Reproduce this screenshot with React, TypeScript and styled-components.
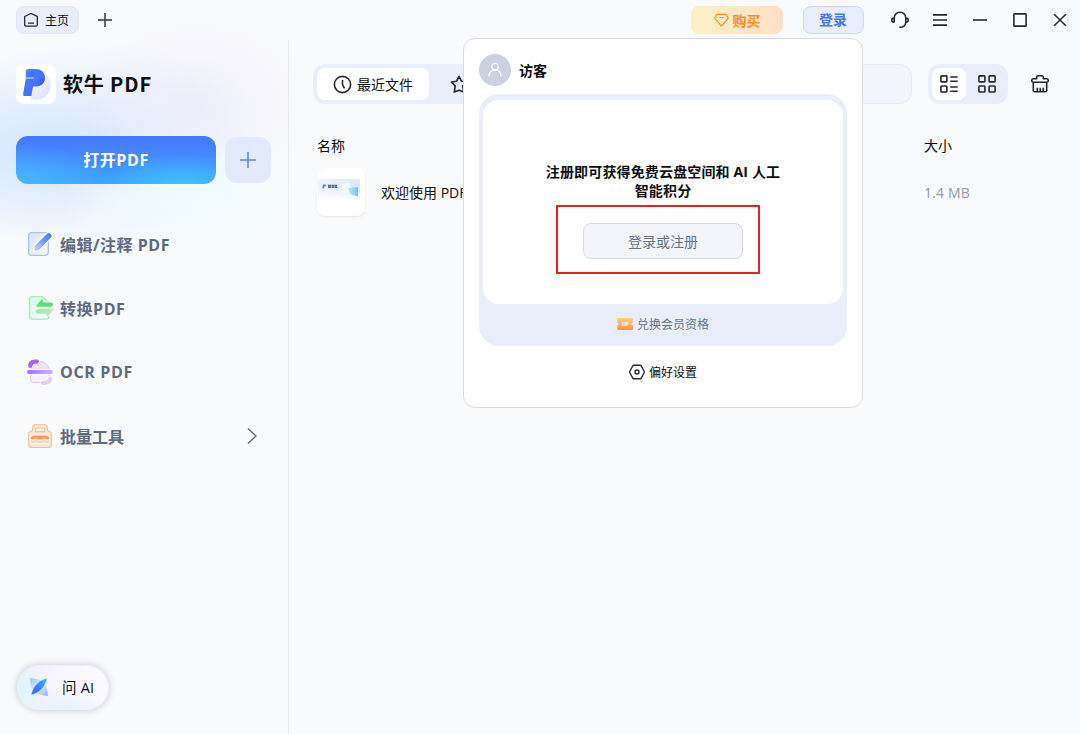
import React from "react";
import styled, { createGlobalStyle } from "styled-components";

const GlobalStyle = createGlobalStyle`
  * { box-sizing: border-box; }
  html, body { margin: 0; padding: 0; }
  body {
    font-family: "Open Sans", "Noto Sans CJK SC", sans-serif;
    color: #0d0f12;
    overflow: hidden;
  }
  button { font: inherit; color: inherit; margin: 0; padding: 0; border: 0; background: none; }
  svg { display: block; flex: none; }
`;

const Window = styled.div`
  position: relative;
  display: flex;
  flex-direction: column;
  width: 1080px;
  height: 734px;
  overflow: hidden;
  background:
    radial-gradient(ellipse 120px 85px at 10px 155px, rgba(200, 227, 252, 0.5), rgba(200, 227, 252, 0.22) 50%, rgba(200, 227, 252, 0)),
    radial-gradient(ellipse 130px 60px at 185px 195px, rgba(238, 253, 255, 0.9), rgba(238, 253, 255, 0.45) 50%, rgba(238, 253, 255, 0)),
    radial-gradient(ellipse 120px 95px at 195px 105px, rgba(235, 232, 250, 0.65), rgba(235, 232, 250, 0.28) 50%, rgba(235, 232, 250, 0)),
    radial-gradient(ellipse 180px 105px at 80px 145px, rgba(208, 226, 253, 0.8), rgba(208, 226, 253, 0.32) 55%, rgba(208, 226, 253, 0)),
    #f9fafc;
`;

const TitleBar = styled.header`
  display: flex;
  align-items: center;
  height: 40px;
  flex: none;
`;

const HomeTab = styled.button`
  display: flex;
  align-items: center;
  gap: 6px;
  width: 63px;
  height: 28px;
  margin-left: 16px;
  padding-left: 6px;
  border: 1px solid #dfe6fb;
  border-radius: 8px;
  background: #e9edfc;
  font-size: 12px;
  white-space: nowrap;
`;

const IconButton = styled.button<{ $size?: number }>`
  display: flex;
  align-items: center;
  justify-content: center;
  width: ${(p) => p.$size ?? 40}px;
  height: ${(p) => p.$size ?? 40}px;
`;

const NewTab = styled(IconButton)`
  margin-left: 6px;
`;

const Spacer = styled.div`
  flex: 1;
`;

const BuyButton = styled.button`
  display: flex;
  align-items: center;
  justify-content: center;
  gap: 4px;
  width: 92px;
  height: 28px;
  border-radius: 8px;
  background: linear-gradient(90deg, #fbf1c5, #ffdfc6);
  color: #fb8c1e;
  font-size: 14px;
  font-weight: 600;
`;

const LoginButton = styled.button`
  width: 61px;
  height: 28px;
  margin: 0 16px 0 20px;
  padding-right: 1px;
  border: 1px solid #cbdafc;
  border-radius: 8px;
  background: #e9eefd;
  color: #4276fb;
  font-size: 14px;
  font-weight: 600;
  line-height: 26px;
`;

const Body = styled.div`
  display: flex;
  flex: 1;
`;

const Sidebar = styled.aside`
  display: flex;
  flex-direction: column;
  width: 289px;
  padding: 24px 16px;
  border-right: 1px solid #e7e9f3;
`;

const Brand = styled.div`
  display: flex;
  align-items: center;
  gap: 8px;
  height: 40px;
`;

const BrandLogo = styled.div`
  width: 40px;
  height: 40px;
  border-radius: 8px;
  background: #fff;
`;

const BrandName = styled.h1`
  margin: 0 0 1px -1px;
  font-family: "Noto Sans CJK SC", sans-serif;
  font-size: 20px;
  font-weight: 700;
  line-height: 39px;
  letter-spacing: 0.85px;
`;

const OpenRow = styled.div`
  display: flex;
  align-items: center;
  gap: 9px;
  margin-top: 32px;
`;

const OpenButton = styled.button`
  width: 200px;
  height: 48px;
  border-radius: 12px;
  background:
    radial-gradient(ellipse 100px 42px at 0 50px, rgba(77, 190, 255, 0.85), rgba(77, 190, 255, 0)),
    radial-gradient(ellipse 85px 34px at 165px 52px, rgba(70, 198, 255, 0.9), rgba(70, 198, 255, 0)),
    linear-gradient(180deg, #4678ff 0%, #448bff 50%, #38a4ff 100%);
  color: #fff;
  font-size: 16px;
  font-weight: 700;
  line-height: 48px;
  letter-spacing: 0.6px;
`;

const AddButton = styled(IconButton)`
  border-radius: 12px;
  background: #e3eafd;
`;

const Menu = styled.nav`
  display: flex;
  flex-direction: column;
  margin-top: 28px;
`;

const MenuItem = styled.a<{ $tracking: number }>`
  display: flex;
  align-items: center;
  gap: 6px;
  height: 64px;
  padding: 0 14px 0 10px;
  color: #5d6a80;
  font-size: 16px;
  font-weight: 700;
  letter-spacing: ${(p) => p.$tracking}px;
  white-space: nowrap;
`;

const AskButton = styled.button`
  display: flex;
  align-items: center;
  gap: 13px;
  width: 92px;
  height: 45px;
  margin: auto 0 0 1px;
  padding: 0 0 2px 11px;
  border: 1px solid #eef0f6;
  border-radius: 23px;
  background:
    radial-gradient(ellipse 34px 26px at 0 55%, #def5ff, rgba(223, 245, 255, 0)),
    radial-gradient(ellipse 44px 18px at 50% 100%, #e5f1ff, rgba(226, 239, 255, 0)),
    linear-gradient(100deg, #f1effc, #fbf9ff 70%);
  box-shadow: 0 0 6px 1px rgba(70, 75, 90, 0.22);
  font-size: 14.500px;
  letter-spacing: 0.2px;
  white-space: nowrap;
`;

const Main = styled.main`
  display: flex;
  flex-direction: column;
  flex: 1;
  padding: 24px 20px 0 24px;
`;

const Toolbar = styled.div`
  display: flex;
  align-items: center;
  height: 40px;
`;

const Segments = styled.div`
  display: flex;
  align-items: center;
  gap: 4px;
  height: 40px;
  padding: 4px;
  border-radius: 12px;
  background: #eaeefa;
`;

const Segment = styled.button<{ $active?: boolean; $width: number }>`
  display: flex;
  align-items: center;
  justify-content: center;
  gap: 5px;
  width: ${(p) => p.$width}px;
  height: 32px;
  border-radius: 8px;
  background: ${(p) => (p.$active ? "#fff" : "transparent")};
  font-size: 14px;
  white-space: nowrap;
`;

const SearchField = styled.div`
  width: 200px;
  height: 40px;
  margin: 0 16px 0 auto;
  border: 1px solid #e9ebf4;
  border-radius: 12px;
  background: #f4f5fa;
`;

const ClearButton = styled(IconButton)`
  margin-left: 12px;
`;

const FileTable = styled.div`
  display: flex;
  flex-direction: column;
  margin-top: 31px;
  padding-left: 4px;
`;

const FileRow = styled.div<{ $height: number }>`
  display: grid;
  grid-template-columns: 607px 1fr;
  align-items: center;
  height: ${(p) => p.$height}px;
  font-size: 14px;
`;

const FileName = styled.div`
  display: flex;
  align-items: center;
  gap: 16px;
`;

const Thumb = styled.div`
  display: flex;
  align-items: flex-start;
  width: 48px;
  height: 48px;
  padding: 11px 1px;
  border-radius: 8px;
  background: #fff;
  box-shadow: 0 1px 2px rgba(40, 50, 80, 0.1);
`;

const Muted = styled.span`
  color: #9299a8;
  letter-spacing: 0.15px;
`;

const AccountPopup = styled.section`
  position: absolute;
  left: 463px;
  top: 38px;
  display: flex;
  flex-direction: column;
  width: 400px;
  height: 370px;
  padding: 15px;
  border: 1px solid #d8dae5;
  border-radius: 12px;
  background: #fff;
`;

const Account = styled.div`
  display: flex;
  align-items: center;
  gap: 8px;
  height: 32px;
  font-size: 14px;
  font-weight: 700;
`;

const Avatar = styled.div`
  display: flex;
  align-items: center;
  justify-content: center;
  width: 32px;
  height: 32px;
  border-radius: 50%;
  background: #cbd1df;
`;

const OfferCard = styled.div`
  display: flex;
  flex-direction: column;
  height: 252px;
  margin-top: 8px;
  padding: 6px 4px 0;
  border-radius: 20px;
  background: #eaeefa;
`;

const Offer = styled.div`
  display: flex;
  flex-direction: column;
  align-items: center;
  height: 204px;
  padding-top: 62px;
  border-radius: 16px;
  background: #fff;
`;

const OfferText = styled.p`
  width: 240px;
  margin: 0 0 23px;
  font-size: 14px;
  font-weight: 700;
  line-height: 19px;
  letter-spacing: 0.15px;
  text-align: center;
`;

const RegisterButton = styled.button`
  width: 160px;
  height: 36px;
  border: 1px solid #d7d9e6;
  border-radius: 8px;
  background: #f4f5fa;
  color: #647084;
  font-size: 14px;
`;

const LinkRow = styled.div<{ $height: number; $color: string }>`
  display: flex;
  align-items: center;
  justify-content: center;
  gap: 4px;
  height: ${(p) => p.$height}px;
  color: ${(p) => p.$color};
  font-size: 12px;
`;

const Redeem = styled(LinkRow)`
  padding-bottom: 2px;
`;

const Preferences = styled(LinkRow)`
  margin-top: 5px;
`;

const Highlight = styled.div`
  position: absolute;
  left: 556px;
  top: 205px;
  width: 204px;
  height: 69px;
  border: 2px solid #ed1c24;
`;

const ink = { fill: "none", stroke: "#26282c", strokeWidth: 1.6 } as const;

const HomeIcon = () => (
  <svg width="16" height="16" viewBox="0 0 16 16" {...ink} strokeWidth={1.3}>
    <path d="M1.700 4.500 8 1.500l6.300 3v8.300q0 1.300-1.300 1.300H3q-1.300 0-1.300-1.300z M5 11.200h6" />
  </svg>
);
const PlusIcon = ({ size, color }: { size: number; color: string }) => (
  <svg width={size} height={size} viewBox="0 0 16 16" stroke={color} strokeWidth="1.6">
    <path d="M8 0v16M0 8h16" />
  </svg>
);
const DiamondIcon = () => (
  <svg width="15" height="14" viewBox="0 0 15 14" fill="none" stroke="#fb8c1e" strokeWidth="1.2" strokeLinejoin="round">
    <path d="M3.700 1.300h7.600q.6 0 1 .6l1.700 2.600q.4.6-.1 1.100L8.200 12.300q-.7.7-1.400 0L1.100 5.600q-.5-.5-.1-1.100L2.700 1.900q.4-.6 1-.6z M5.200 4.500h4.600" />
  </svg>
);
const HeadsetIcon = () => (
  <svg width="20" height="20" viewBox="0 0 20 20" {...ink}>
    <path d="M4.200 12.500V8a5.800 5.800 0 0 1 11.600 0v3.500c0 3.400-2.100 5.800-5.400 5.800H9.300" />
    <path d="M4.200 8C.9 7.800.9 12.400 4.200 12.200M15.800 8c3.300-.2 3.300 4.400 0 4.200" />
  </svg>
);
const MenuIcon = () => (
  <svg width="14" height="14" viewBox="0 0 14 14" {...ink}><path d="M0 1.900h14M0 7h14M0 12.100h14" /></svg>
);
const MinimizeIcon = () => (
  <svg width="14" height="14" viewBox="0 0 14 14" {...ink}><path d="M0 7h14" /></svg>
);
const MaximizeIcon = () => (
  <svg width="14" height="14" viewBox="0 0 14 14" {...ink}><rect x=".9" y=".9" width="12.200" height="12.200" rx=".7" /></svg>
);
const CloseIcon = () => (
  <svg width="14" height="14" viewBox="0 0 14 14" {...ink} strokeWidth={1.5}><path d="m1.200 1.200 11.600 11.600M12.800 1.200 1.200 12.800" /></svg>
);
const LogoIcon = () => (
  <svg width="40" height="40" viewBox="0 0 40 40">
    <defs>
      <linearGradient id="logoBlue" x1="0" y1="0" x2="1" y2=".65">
        <stop offset="0" stopColor="#39b5fb" /><stop offset=".3" stopColor="#4376fb" /><stop offset=".7" stopColor="#4772ff" /><stop offset="1" stopColor="#2d4fc8" />
      </linearGradient>
      <linearGradient id="logoShade" x1=".2" y1="0" x2="1" y2="1">
        <stop offset="0" stopColor="#f9faff" /><stop offset="1" stopColor="#d7ddf8" />
      </linearGradient>
    </defs>
    <path d="M29.500 9.500C36 16 36 25 31 31c-5 5.500-12 5.200-16.500 4.500L17 24z" fill="url(#logoShade)" />
    <path d="M12.500 5h7.500c5.500 0 9 3.800 9 8.700 0 5.300-4 8.900-9.500 8.900h-2.500L15.400 32H8.500q-1.700 0-1.400-1.700l2.700-15.700V7.700Q9.800 5 12.500 5z" fill="url(#logoBlue)" />
    <path d="M9.500 14h8.300" stroke="#d8e7ff" strokeWidth="1" />
  </svg>
);
const EditIcon = () => (
  <svg width="28" height="28" viewBox="0 0 28 28" fill="none">
    <defs>
      <linearGradient id="editPage" x1="0" y1="0" x2="1" y2="1"><stop stopColor="#d6e4fc" /><stop offset="1" stopColor="#f9faff" /></linearGradient>
      <linearGradient id="editPen" x1="1" y1="0" x2="0" y2="1"><stop stopColor="#4676fa" /><stop offset=".45" stopColor="#6c93fa" /><stop offset="1" stopColor="#d3defd" /></linearGradient>
    </defs>
    <rect x="2.700" y="2.700" width="19.600" height="22.600" rx="3" fill="url(#editPage)" stroke="#a9c0f3" strokeWidth="1.300" />
    <path d="M9 21.300q-1.500 0-1.300-1.500l.6-4.300L20.700 3.400q2.300-2 4.500.1 2.100 2.200.1 4.500L13.500 20.200q-.6.600-1.400.7z" fill="url(#editPen)" stroke="#fff" strokeWidth="1.100" />
  </svg>
);
const ConvertIcon = () => (
  <svg width="28" height="28" viewBox="0 0 28 28" fill="none">
    <defs>
      <linearGradient id="convPage" x1="0" y1="0" x2="1" y2="1"><stop stopColor="#d2fae5" /><stop offset="1" stopColor="#f4fff8" /></linearGradient>
      <linearGradient id="convArrow" x1="0" y1="0" x2="1" y2="1"><stop stopColor="#98e5a4" /><stop offset="1" stopColor="#c5f2ce" /></linearGradient>
    </defs>
    <path d="M6.500 2.700h9.500l7 5.500v14q0 3-3 3H6.500q-3 0-3-3V5.700q0-3 3-3z" fill="url(#convPage)" stroke="#abe9b8" strokeWidth="1.200" />
    <path d="M11 13.200q-1.900-.3-.6-2.100l4.300-5.300q2.600-2.300 2.600.9V8h7.700q2.400.3 2.400 2.600T25 13.200z" fill="#5edd76" stroke="#f7fffa" strokeWidth=".8" />
    <path d="M12 14.600h14q2.600.3 1.200 2.200l-4.900 5.600q-2.200 1.800-2.200-.8v-1.300h-8.300q-2.600-.3-2.600-2.800t2.800-2.900z" fill="url(#convArrow)" stroke="#fff" strokeWidth=".8" />
  </svg>
);
const OcrIcon = () => (
  <svg width="28" height="28" viewBox="0 0 28 28" fill="none" overflow="visible">
    <defs>
      <linearGradient id="ocrBar"><stop stopColor="#a56cf7" /><stop offset="1" stopColor="#d1b4fa" /></linearGradient>
    </defs>
    <path d="M4.600 13.500C4.600 7 8.500 3.600 14 3.600s9.300 4 9.400 9.900z" fill="#efe3ff" stroke="#dcc7fa" />
    <path d="M4.600 15.500h18.800V21q0 3.500-3.700 3.500H8.300q-3.700 0-3.700-3.500z" fill="#f6efff" stroke="#d7bdfa" />
    <path d="M4.300 7.800q0-4.200 4.700-4.200h1.800" stroke="#fff" strokeWidth="5.800" strokeLinecap="round" />
    <path d="M4.300 7.800q0-4.200 4.700-4.200h1.800" stroke="#a467fa" strokeWidth="4.400" strokeLinecap="round" />
    <path d="M16.500 24.800h1.800q5.700 0 5.700-4.300" stroke="#fff" strokeWidth="5.800" strokeLinecap="round" />
    <path d="M16.500 24.800h1.800q5.700 0 5.700-4.300" stroke="#e0cff9" strokeWidth="4.200" strokeLinecap="round" />
    <rect x="0" y="11" width="28" height="6" rx="3" fill="#fff" />
    <rect x="1" y="12" width="26" height="4" rx="2" fill="url(#ocrBar)" />
  </svg>
);
const ToolsIcon = () => (
  <svg width="28" height="28" viewBox="0 0 28 28" fill="none">
    <path d="M6.600 8.500V6.700q0-4.200 4.200-4.200h6.400q4.200 0 4.200 4.200v1.800q3.900.7 3.900 4.500v9.200q0 3.300-3.300 3.300H6q-3.300 0-3.300-3.300V13q0-3.800 3.900-4.500z" fill="#fde9d6" stroke="#f6bf97" strokeWidth="1.200" />
    <path d="M9.500 9.700V7.200q0-1 1-1h7q1 0 1 1v2.500z" fill="#fff9f3" stroke="#f6bf97" strokeWidth="1.200" />
    <path d="M4.800 17.500q0-3.800 3.400-3.800h11.600q3.400 0 3.400 3.800v1H4.800z" fill="#f2995a" />
    <path d="M4 17.800h3.800l1.800-1.600 1.800 1.600h5.200l1.800-1.600 1.800 1.600H24v1.800q0 2-1.900 2h-2l-1.700-1.300-1.700 1.300h-5.400l-1.700-1.300-1.700 1.300h-2q-1.900 0-1.900-2z" fill="#fcd6b5" stroke="#fff" strokeWidth=".9" />
  </svg>
);
const ChevronIcon = () => (
  <svg width="12" height="18" viewBox="0 0 12 18" fill="none" stroke="#626b7a" strokeWidth="1.400" style={{ marginLeft: "auto" }}><path d="m2 1.500 8 7.500-8 7.500" /></svg>
);
const AskIcon = () => (
  <svg width="20" height="20" viewBox="0 0 20 20">
    <defs>
      <linearGradient id="askLeaf" x1="1" y1="0" x2="0" y2="1"><stop stopColor="#45b8ff" /><stop offset=".6" stopColor="#397cf5" /><stop offset="1" stopColor="#4668f5" /></linearGradient>
      <linearGradient id="askWing" x1="0" y1="0" x2="1" y2="1"><stop stopColor="#98c4fc" /><stop offset=".5" stopColor="#e2edff" /><stop offset="1" stopColor="#8eafff" /></linearGradient>
    </defs>
    <path d="M1 1c4 .8 10 1 14 4.500 3 3.500 3.500 9.500 4 13.500-4.500-.8-10.500-1-14.500-4.500C1.500 11 1.500 5.500 1 1z" fill="url(#askWing)" />
    <path d="M18.300 1.200C11 2.500 4 8 2 18 9.500 16.500 16 11 18.300 1.200z" fill="url(#askLeaf)" stroke="#eef4ff" strokeWidth=".5" />
  </svg>
);
const ClockIcon = () => (
  <svg width="19" height="19" viewBox="0 0 19 19" {...ink}><circle cx="9.500" cy="9.500" r="8.100" /><path d="M9.500 5v4.500l2 3.800" /></svg>
);
const StarIcon = () => (
  <svg width="18" height="19" viewBox="0 0 18 19" {...ink} strokeLinejoin="round"><path d="m9 1.300 2.400 4.900 5.300.8-3.900 3.900.9 6.200L9 15.200l-4.700 1.900.9-6.200L1.300 7l5.300-.8z" /></svg>
);
const ListIcon = () => (
  <svg width="20" height="20" viewBox="0 0 20 20" {...ink}>
    <rect x="1.900" y="1.900" width="6" height="6" rx=".8" /><rect x="1.900" y="12" width="6" height="6" rx=".8" />
    <path d="M11.200 3h7.500M11.200 7.200h7.500M11.200 13h7.500M11.200 17.300h7.500" />
  </svg>
);
const GridIcon = () => (
  <svg width="20" height="20" viewBox="0 0 20 20" {...ink}>
    <rect x="1.900" y="1.900" width="6" height="6" rx=".8" /><rect x="12.100" y="1.900" width="6" height="6" rx=".8" />
    <rect x="1.900" y="12" width="6" height="6" rx=".8" /><rect x="12.100" y="12" width="6" height="6" rx=".8" />
  </svg>
);
const BroomIcon = () => (
  <svg width="20" height="20" viewBox="0 0 20 20" {...ink} strokeLinejoin="round">
    <path d="M3.300 8.300h13.400v8.500q0 1-1 1H4.300q-1 0-1-1zM3.300 8.300q-1.500 0-1.500-1.500v-.6q0-1.400 1.400-1.400h3.500V3.300q0-1.500 1.500-1.500h3.600q1.500 0 1.500 1.500v1.500h3.500q1.400 0 1.400 1.400v.6q0 1.500-1.500 1.500M7.300 13.800v4M10.200 13.800v4M13.200 13.800v4" />
  </svg>
);
const PreviewArt = () => (
  <svg width="42" height="22" viewBox="0 0 42 22">
    <defs>
      <linearGradient id="artBg"><stop stopColor="#eff1fb" /><stop offset="1" stopColor="#dbeafa" /></linearGradient>
      <linearGradient id="artFade" x1="0" y1="0" x2="0" y2="1"><stop offset=".4" stopColor="#fff" stopOpacity="0" /><stop offset="1" stopColor="#fff" /></linearGradient>
      <linearGradient id="artBlock"><stop stopColor="#c5e4fa" /><stop offset="1" stopColor="#79c2f6" /></linearGradient>
    </defs>
    <path d="M0 0h42v22H0z" fill="url(#artBg)" />
    <path d="M0 0h42v22H0z" fill="url(#artFade)" />
    <path d="M5 5.500h2.500v2H6.200v1.800H4.500z" fill="#4778f7" />
    <path d="M10 6.500h3M13.500 6.500h2.500M16.500 6.500h2.500M10 8.200h3M13.500 8.200h3M17 8.200h2.500" stroke="#5b6272" strokeWidth="1.500" />
    <path d="m24 5 7-1 3 9-10 1z" fill="#f7fbff" opacity=".8" />
    <path d="m30 9 10-1v9.500l-8-2.500z" fill="url(#artBlock)" />
  </svg>
);
const PersonIcon = () => (
  <svg width="16" height="16" viewBox="0 0 16 16" fill="none" stroke="#fff" strokeWidth="1.200"><circle cx="8" cy="4.700" r="3.200" /><path d="M2 14.500c0-4 2-6.300 6-6.300s6 2.300 6 6.300" /></svg>
);
const TicketText = styled.text`
  font: italic 700 4.500px "Open Sans", sans-serif;
  fill: #fff;
`;
const TicketIcon = () => (
  <svg width="16" height="12" viewBox="0 0 16 12">
    <defs><linearGradient id="ticket" x1="0" y1="0" x2="0" y2="1"><stop stopColor="#fdd184" /><stop offset="1" stopColor="#fc9143" /></linearGradient></defs>
    <path d="M1.200 0h13.600Q16 0 16 1.200v3.300a1.500 1.500 0 0 0 0 3v3.300q0 1.200-1.200 1.200H1.200Q0 12 0 10.800V7.500a1.500 1.500 0 0 0 0-3V1.200Q0 0 1.200 0z" fill="url(#ticket)" />
    <TicketText x="8" y="7.700" textAnchor="middle">VIP</TicketText>
  </svg>
);
const SettingsIcon = () => (
  <svg width="16" height="16" viewBox="0 0 16 16" {...ink} strokeWidth={1.4}><path d="M4.800 1.200h6.400q.6 0 .9.500l3 5.500q.4.800 0 1.600l-3 5.500q-.3.500-.9.500H4.800q-.6 0-.9-.5L.9 8.800q-.4-.8 0-1.600l3-5.500q.3-.5.900-.5z" /><circle cx="8" cy="8" r="2" /></svg>
);

const tools = [
  { label: "编辑/注释 PDF", Icon: EditIcon, tracking: 0.5 },
  { label: "转换PDF", Icon: ConvertIcon, tracking: 0.55 },
  { label: "OCR PDF", Icon: OcrIcon, tracking: 0.65 },
  { label: "批量工具", Icon: ToolsIcon, tracking: 0, more: true },
];
const windowActions = [HeadsetIcon, MenuIcon, MinimizeIcon, MaximizeIcon, CloseIcon];

export default function App() {
  return (
    <>
      <GlobalStyle />
      <Window>
        <TitleBar>
          <HomeTab><HomeIcon />主页</HomeTab>
          <NewTab><PlusIcon size={14} color="#303236" /></NewTab>
          <Spacer />
          <BuyButton><DiamondIcon />购买</BuyButton>
          <LoginButton>登录</LoginButton>
          {windowActions.map((Icon, i) => <IconButton key={i}><Icon /></IconButton>)}
        </TitleBar>
        <Body>
          <Sidebar>
            <Brand>
              <BrandLogo><LogoIcon /></BrandLogo>
              <BrandName>软牛 PDF</BrandName>
            </Brand>
            <OpenRow>
              <OpenButton>打开PDF</OpenButton>
              <AddButton $size={46}><PlusIcon size={16} color="#5c83fb" /></AddButton>
            </OpenRow>
            <Menu>
              {tools.map(({ label, Icon, tracking, more }) => (
                <MenuItem key={label} $tracking={tracking}><Icon />{label}{more && <ChevronIcon />}</MenuItem>
              ))}
            </Menu>
            <AskButton><AskIcon />问 AI</AskButton>
          </Sidebar>
          <Main>
            <Toolbar>
              <Segments>
                <Segment $active $width={112}><ClockIcon />最近文件</Segment>
                <Segment $width={52}><StarIcon /></Segment>
              </Segments>
              <SearchField />
              <Segments>
                <Segment $active $width={34}><ListIcon /></Segment>
                <Segment $width={34}><GridIcon /></Segment>
              </Segments>
              <ClearButton><BroomIcon /></ClearButton>
            </Toolbar>
            <FileTable>
              <FileRow $height={20}><span>名称</span><span>大小</span></FileRow>
              <FileRow $height={74}>
                <FileName><Thumb><PreviewArt /></Thumb>欢迎使用 PDF</FileName>
                <Muted>1.4 MB</Muted>
              </FileRow>
            </FileTable>
          </Main>
        </Body>
        <AccountPopup>
          <Account><Avatar><PersonIcon /></Avatar>访客</Account>
          <OfferCard>
            <Offer>
              <OfferText>注册即可获得免费云盘空间和 AI 人工智能积分</OfferText>
              <RegisterButton>登录或注册</RegisterButton>
            </Offer>
            <Redeem $height={42} $color="#677386"><TicketIcon />兑换会员资格</Redeem>
          </OfferCard>
          <Preferences $height={42} $color="#0d0f12"><SettingsIcon />偏好设置</Preferences>
        </AccountPopup>
        <Highlight />
      </Window>
    </>
  );
}
